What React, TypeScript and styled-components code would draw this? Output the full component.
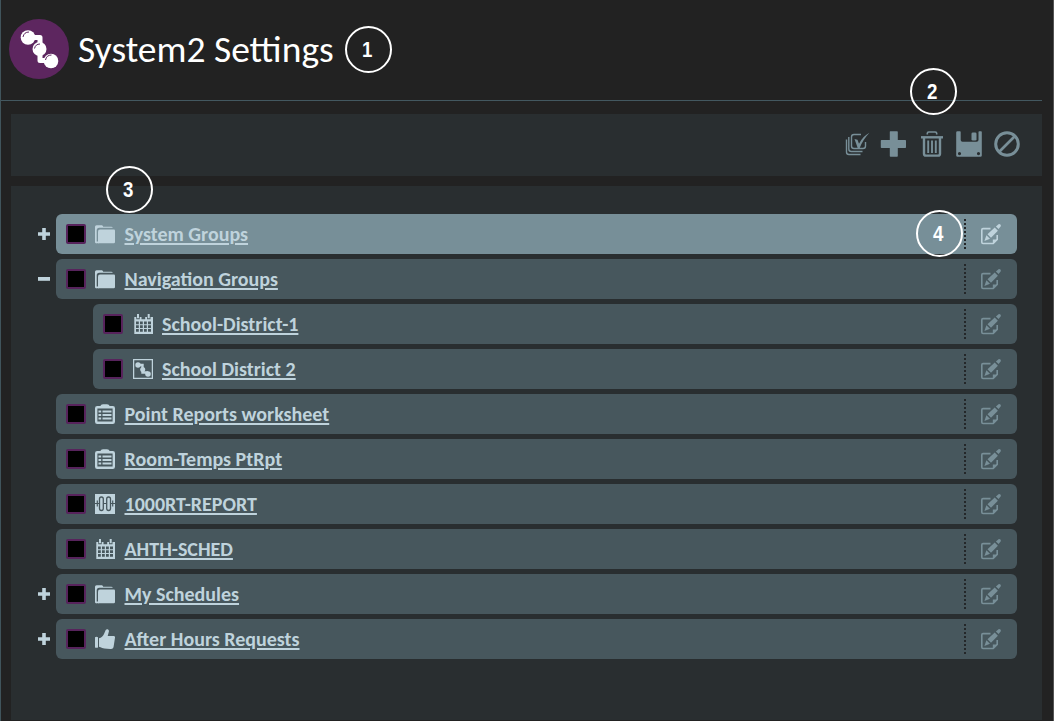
import React from "react";
import styled, { createGlobalStyle } from "styled-components";

const GlobalStyle = createGlobalStyle`
  * { box-sizing: border-box; }
  body { margin: 0; background: #222222; overflow: hidden; }
`;

const Page = styled.div`
  position: relative;
  width: 1054px;
  height: 721px;
  padding-right: 11px;
  overflow: hidden;
  display: flex;
  flex-direction: column;
  background: #222222;
  border-left: 1px solid #40545b;
  border-right: 1px solid #555555;
  font-family: Carlito, Lato, sans-serif;
`;

const Header = styled.header`
  height: 101px;
  flex: none;
  display: flex;
  align-items: flex-start;
  padding: 19px 0 0 8px;
  border-bottom: 1px solid #435860;
`;

const Logo = styled.svg`
  width: 60px;
  height: 60px;
  flex: none;
`;

const Title = styled.h1`
  margin: 0 0 0 9px;
  font-size: 37.5px;
  line-height: 60px;
  font-weight: 400;
  white-space: nowrap;
  color: #ffffff;
`;

const Toolbar = styled.div`
  margin: 13px 0 0 10px;
  height: 62px;
  flex: none;
  display: flex;
  justify-content: flex-end;
  align-items: center;
  gap: 12px;
  padding: 0 22px 2px 0;
  background: #292e30;
`;

const ToolIcon = styled.svg`
  width: 26px;
  height: 26px;
  overflow: visible;
  color: #788f98;
`;

const Panel = styled.main`
  margin: 10px 0 1px 10px;
  flex: 1;
  display: flex;
  flex-direction: column;
  gap: 5px;
  padding: 28px 25px 0 23px;
  background: #292e30;
`;

const TreeLine = styled.div<{ $level: number }>`
  display: flex;
  height: 40px;
  padding-left: ${(p) => p.$level * 37}px;
`;

const Toggle = styled.div`
  width: 22px;
  flex: none;
  padding: 14px 0 0 4px;
  svg { display: block; width: 12px; height: 12px; }
`;

const Row = styled.div<{ $selected?: boolean }>`
  flex: 1;
  display: flex;
  align-items: center;
  padding-left: 10px;
  border-radius: 6px;
  background: ${(p) => (p.$selected ? "#778f98" : "#47575d")};
  color: #bfd3dc;
`;

const Checkbox = styled.span`
  width: 20px;
  height: 20px;
  flex: none;
  border: 2px solid #57235c;
  border-radius: 2px;
  background: #000;
`;

const ItemIcon = styled.svg`
  width: 20px;
  height: 20px;
  flex: none;
  color: #bfd3dc;
`;

const IconSlot = styled.span<{ $nested: boolean }>`
  display: flex;
  width: ${(p) => (p.$nested ? 39 : 38.5)}px;
  flex: none;
  padding-left: ${(p) => (p.$nested ? 10 : 9)}px;
`;

const Label = styled.a`
  flex: 1;
  font-size: 20px;
  line-height: 24px;
  font-weight: 700;
  white-space: nowrap;
  text-decoration: underline;
  text-decoration-thickness: 2px;
  text-underline-offset: 2px;
`;

const EditCell = styled.div<{ $selected?: boolean }>`
  width: 53px;
  height: 30px;
  flex: none;
  display: flex;
  align-items: center;
  padding-left: 15px;
  border-left: 2px dotted #242729;
  color: ${(p) => (p.$selected ? "#bfd3dc" : "#788f98")};
  svg { width: 20px; height: 21px; }
`;

const Callout = styled.span<{ $x: number; $y: number }>`
  position: absolute;
  left: ${(p) => p.$x}px;
  top: ${(p) => p.$y}px;
  width: 47px;
  height: 47px;
  border: 2px solid #ffffff;
  border-radius: 50%;
  display: flex;
  align-items: center;
  justify-content: center;
  padding-right: 3px;
  color: #ffffff;
`;

const Digit = styled.b`
  font: 700 22px/20px "Liberation Sans", Arial, sans-serif;
  transform: scaleX(0.85);
`;

const FolderIcon = () => (
  <ItemIcon viewBox="0 0 20 20" fill="currentColor">
    <path d="M0 18V2.800Q0 1.200 1.600 1.200h5.200q1.200 0 1.400 1.500h8q1.500 0 1.500 1.100H4.300Q1.700 3.800 1.700 6.500v12.700H1Q0 19.200 0 18z" />
    <path d="M3 19.200V7.400Q3 5.400 5 5.400H19q1 0 1 1V18q0 1.200-1.200 1.200z" />
    <path d="M1 17.500h3v1.700H1z" />
  </ItemIcon>
);

const CalendarIcon = () => (
  <ItemIcon viewBox="0 0 20 20" fill="currentColor">
    <path fillRule="evenodd" d="M1.300 3h2v2.200h3.400V3h1.800v2.200h3.700V3H14v2.200h3.500V3H20v17H1.300zM3 7.500v2.700h2.800V7.500zm4 0v2.700h2.800V7.500zm4 0v2.700h2.800V7.500zm4 0v2.700h3V7.500zM3 11.300v2.600h2.800v-2.600zm4 0v2.600h2.800v-2.600zm4 0v2.600h2.800v-2.600zm4 0v2.600h3v-2.600zM3 15.100v2.700h2.800v-2.700zm4 0v2.700h2.800v-2.700zm4 0v2.700h2.800v-2.700zm4 0v2.700h3v-2.700z" />
    <path d="M4 0h2v4.200H4zM14.700 0h2v4.200h-2z" />
  </ItemIcon>
);

const ScreenIcon = () => (
  <ItemIcon viewBox="0 0 20 20" fill="none" stroke="currentColor">
    <path d="M.6.6h18.800v18.800H.6z" strokeWidth="1.300" />
    <path d="M5 6h4.500v7.500H15" strokeWidth="2.400" />
    <g fill="currentColor" stroke="none"><circle cx="5" cy="6" r="2.700" /><circle cx="9.700" cy="10.500" r="2.500" /><circle cx="15" cy="15" r="2.800" /></g>
  </ItemIcon>
);

const ClipboardIcon = () => (
  <ItemIcon viewBox="0 0 20 20" fill="none" stroke="currentColor">
    <rect x="1.200" y="3.200" width="17.600" height="15.600" rx="1" strokeWidth="2.400" />
    <path d="M5 2.500Q6 .2 8 .2h4q2 0 3 2.300z" fill="currentColor" stroke="none" />
    <path d="M3.500 7.500h2.700M3.500 11h2.700M3.500 14.500h2.700M7.500 7.500H16.500M7.500 11H16.500M7.500 14.500H16.500" strokeWidth="2.100" />
  </ItemIcon>
);

const ValveIcon = () => (
  <ItemIcon viewBox="0 0 20 20" fill="none" stroke="#47575d">
    <path d="M0 0h20v20H0z" fill="currentColor" stroke="none" />
    <path d="M0 9.500h4.500M8.300 9.500h3.400M15.500 9.500H20M2.300 6.500v6M17.700 6.500v6" strokeWidth="1.200" />
    <rect x="4.500" y="3" width="3.800" height="13.500" rx="1.900" strokeWidth="1.300" />
    <rect x="11.700" y="3" width="3.800" height="13.500" rx="1.900" strokeWidth="1.300" />
  </ItemIcon>
);

const ThumbIcon = () => (
  <ItemIcon viewBox="0 0 20 20" fill="currentColor">
    <path d="M0 8.200Q1.500 7.500 3 8.200v10.300Q1.500 19 0 18.500z" />
    <path d="M4 9.200Q7.500 8.500 9 5l1.700-4Q11.300 0 12.700.2q1.500.5 1.200 2.300L12.700 7h6q1.500.2 1.300 1.700l-1.500 9.500q-.5 1.700-2.300 1.700Q8.500 20 5.500 18.200L4 17.700z" />
  </ItemIcon>
);

const EditIcon = () => (
  <svg viewBox="0 0 20 21" fill="currentColor">
    <path d="M9.500 4.600H2Q.8 4.600.8 5.800v12.500q0 1.200 1.200 1.200h10.200l4-4V11" fill="none" stroke="currentColor" strokeWidth="1.600" />
    <path d="M11.800 20v-4.600h4.800z" />
    <path d="M3.400 16.900l2-5.600 3.600 3.500zM6.500 10.300l7.200-6.700 3.200 3.200-6.900 6.900zM14.900 2.500L17.500.3q1-.6 1.900.3.800 1 .2 1.900l-2 2.500z" />
  </svg>
);

const icons = {
  folder: FolderIcon,
  calendar: CalendarIcon,
  screen: ScreenIcon,
  clipboard: ClipboardIcon,
  valve: ValveIcon,
  thumb: ThumbIcon,
};

type Item = {
  label: string;
  icon: keyof typeof icons;
  level?: number;
  toggle?: "plus" | "minus";
  selected?: boolean;
};

const items: Item[] = [
  { label: "System Groups", icon: "folder", toggle: "plus", selected: true },
  { label: "Navigation Groups", icon: "folder", toggle: "minus" },
  { label: "School-District-1", icon: "calendar", level: 1 },
  { label: "School District 2", icon: "screen", level: 1 },
  { label: "Point Reports worksheet", icon: "clipboard" },
  { label: "Room-Temps PtRpt", icon: "clipboard" },
  { label: "1000RT-REPORT", icon: "valve" },
  { label: "AHTH-SCHED", icon: "calendar" },
  { label: "My Schedules", icon: "folder", toggle: "plus" },
  { label: "After Hours Requests", icon: "thumb", toggle: "plus" },
];

const callouts = [
  { n: 1, x: 344, y: 26 },
  { n: 2, x: 909, y: 68 },
  { n: 3, x: 105, y: 166 },
  { n: 4, x: 915, y: 210 },
];

export default function App() {
  return (
    <Page>
      <GlobalStyle />
      <Header>
        <Logo viewBox="0 0 60 60">
          <circle cx="30" cy="30" r="30" fill="#5d265f" />
          <path d="M22 18.500h9v12M31 32v9.500h8" fill="none" stroke="#fff" strokeWidth="5" strokeLinejoin="round" />
          <g fill="#fff"><circle cx="19" cy="18.500" r="7.300" /><circle cx="30.500" cy="30" r="7" /><circle cx="42" cy="42" r="7.300" /></g>
          <path d="M14 18q1-5 6-5M25.500 29.500q1-4.500 5.500-4.500M36.500 41q1-5 6-5" fill="none" stroke="#5d265f" strokeWidth="1" />
        </Logo>
        <Title>System2 Settings</Title>
      </Header>
      <Toolbar>
        <ToolIcon viewBox="0 0 26 26" fill="none" stroke="currentColor" strokeWidth="1.400">
          <path d="M19 3.500H12Q9.500 3.500 9.500 6v9q0 2.500 2.500 2.500h9q2.500 0 2.500-2.500v-4M6.800 6v12q0 2.500 2.500 2.500H20.500M4.500 8.500v12.500q0 2.500 2.500 2.500H18.500" />
          <path d="M12.500 8l3 .8 1.500 4Q21 5 27.500 1.800 21 8.500 17.700 17h-2z" fill="currentColor" stroke="none" />
        </ToolIcon>
        <ToolIcon viewBox="0 0 26 26" fill="currentColor"><path d="M10.300.3h6.900q.6 0 .6.600V9h7.500q.7 0 .7.700v6.600q0 .7-.7.700h-7.500v8q0 .7-.7.700h-6.600q-.7 0-.7-.7v-8H1.500q-.7 0-.7-.7V9.700Q.8 9 1.500 9h8.300V.8q0-.5.500-.5z" /></ToolIcon>
        <ToolIcon viewBox="0 0 26 26" fill="none" stroke="currentColor">
          <path d="M3 6.300h22" strokeWidth="2.400" />
          <path d="M9.300 3.500V2.200Q9.300 1 10.800 1h6.400q1.500 0 1.500 1.200v1.300" strokeWidth="1.600" />
          <path d="M6 7v15.700q0 1.900 1.900 1.900h12.200q1.900 0 1.900-1.900V7" strokeWidth="2.400" />
          <path d="M10.200 9.500v12.500M14 9.500v12.500M17.800 9.500v12.500" strokeWidth="1.900" />
        </ToolIcon>
        <ToolIcon viewBox="0 0 26 26" fill="currentColor">
          <path fillRule="evenodd" d="M1.500.3H4q.7 0 .7.700v8q0 1.800 1.800 1.800h14q2 0 2-1.800V1q0-.7.700-.7H25q.8 0 .8.800v23.300q0 1.400-1.400 1.400H1.600Q.2 25.800.2 24.400V1.500Q.2.300 1.500.3zM3.500 21a1.600 1.600 0 100 3.200 1.600 1.600 0 000-3.200zm19 0a1.600 1.600 0 100 3.200 1.600 1.600 0 000-3.200z" />
          <rect x="15.500" y="1.500" width="5" height="8" rx="1.300" />
        </ToolIcon>
        <ToolIcon viewBox="0 0 26 26" fill="none" stroke="currentColor" strokeWidth="3"><circle cx="13" cy="13" r="11.300" /><path d="M5 21L21 5" strokeWidth="2.600" /></ToolIcon>
      </Toolbar>
      <Panel>
        {items.map((item) => {
          const Icon = icons[item.icon];
          return (
            <TreeLine key={item.label} $level={item.level ?? 0}>
              <Toggle>
                {item.toggle && (
                  <svg viewBox="0 0 12 12" fill="#bfd3dc">
                    <path d={item.toggle === "plus" ? "M4.200 0h3.600v4.200H12v3.600H7.800V12H4.200V7.800H0V4.200h4.200z" : "M0 4h12v3.800H0z"} />
                  </svg>
                )}
              </Toggle>
              <Row $selected={item.selected}>
                <Checkbox />
                <IconSlot $nested={!!item.level}><Icon /></IconSlot>
                <Label>{item.label}</Label>
                <EditCell $selected={item.selected}><EditIcon /></EditCell>
              </Row>
            </TreeLine>
          );
        })}
      </Panel>
      {callouts.map((c) => (
        <Callout key={c.n} $x={c.x} $y={c.y}><Digit>{c.n}</Digit></Callout>
      ))}
    </Page>
  );
}
